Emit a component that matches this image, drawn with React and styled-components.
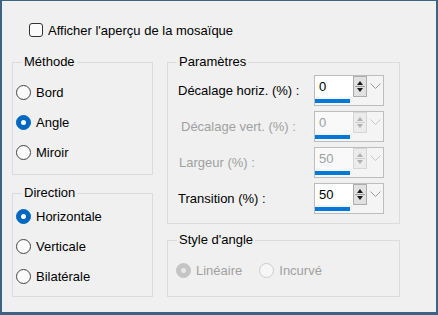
import React from "react";
import styled, { createGlobalStyle } from "styled-components";

const GlobalStyle = createGlobalStyle`
  body {
    margin: 0;
    font-family: "Liberation Sans", Arial, sans-serif;
    font-size: 13px;
    color: #000;
  }
`;

// =========================================================
const Window = styled.div`
  width: 438px;
  height: 315px;
  box-sizing: border-box;
  border: solid #3c6385;
  border-width: 1px 2px 3px 2px;
  background: #f0f0f0;
  padding: 21px 0 0 10px;
  display: flex;
  flex-direction: column;
`;

const CheckRow = styled.label`
  display: flex;
  align-items: center;
  gap: 5px;
  height: 16px;
  margin-left: 17px;
`;

const CheckBox = styled.span`
  width: 14px;
  height: 14px;
  box-sizing: border-box;
  border: 1px solid #333;
  border-radius: 3px;
  background: #fbfbfb;
`;

const Columns = styled.div`
  display: flex;
  gap: 14px;
  margin-top: 16px;
`;

const Column = styled.div`
  display: flex;
  flex-direction: column;
  width: ${(p) => p.$w}px;
  gap: ${(p) => p.$gap}px;
`;

const Group = styled.fieldset`
  margin: 0;
  padding: 0;
  min-width: 0;
  box-sizing: border-box;
  height: ${(p) => p.$h}px;
  border: 1px solid #dcdcdc;
`;

const Legend = styled.legend`
  margin-left: 9px;
  padding: 0 2px;
  line-height: 16px;
`;

const GroupBody = styled.div`
  padding: ${(p) => p.$top}px 0 0 ${(p) => p.$left}px;
  display: flex;
  flex-direction: ${(p) => (p.$row ? "row" : "column")};
`;

// =========================================================
const RadioRow = styled.label`
  display: flex;
  align-items: center;
  gap: 5px;
  height: 30px;
  margin-right: ${(p) => p.$mr || 0}px;
  color: ${(p) => (p.$disabled ? "#a0a0a0" : "#000")};
`;

const Dot = styled.span`
  width: 15px;
  height: 15px;
  box-sizing: border-box;
  border-radius: 50%;
  display: flex;
  align-items: center;
  justify-content: center;
  border: 1px solid
    ${(p) => (p.$checked ? (p.$disabled ? "#c4c4c4" : "#0067c0") : p.$disabled ? "#cccccc" : "#444")};
  background: ${(p) => (p.$checked ? (p.$disabled ? "#c4c4c4" : "#0067c0") : p.$disabled ? "#f6f6f6" : "#fbfbfb")};

  &::after {
    content: "";
    display: ${(p) => (p.$checked ? "block" : "none")};
    width: 5px;
    height: 5px;
    border-radius: 50%;
    background: ${(p) => (p.$disabled ? "#e8e8e8" : "#fff")};
  }
`;

function Radio({ label, checked, disabled, mr }) {
  return (
    <RadioRow $disabled={disabled} $mr={mr}>
      <Dot $checked={checked} $disabled={disabled} />
      {label}
    </RadioRow>
  );
}

// =========================================================
const ParamRows = styled.div`
  display: flex;
  flex-direction: column;
  gap: 5px;
`;

const ParamRow = styled.div`
  display: flex;
  align-items: center;
  height: 31px;
`;

const ParamLabel = styled.span`
  width: ${(p) => 136 - p.$indent}px;
  padding-left: ${(p) => p.$indent}px;
  color: ${(p) => (p.$disabled ? "#a0a0a0" : "#000")};
`;

const Spin = styled.div`
  width: 70px;
  height: 31px;
  box-sizing: border-box;
  border: 1px solid #bdbdbd;
  display: grid;
  grid-template-columns: 38px 14px 1fr;
  grid-template-rows: 21px 1fr;
  background: #f4f4f4;
`;

const Field = styled.div`
  background: ${(p) => (p.$disabled ? "#f9f9f9" : "#fff")};
  color: ${(p) => (p.$disabled ? "#a0a0a0" : "#000")};
  padding-left: 4px;
  line-height: 21px;
`;

const Arrows = styled.div`
  box-sizing: border-box;
  border: 1px solid ${(p) => (p.$disabled ? "#d6d6d6" : "#adadad")};
  background: ${(p) => (p.$disabled ? "#ececec" : "#e1e1e1")};
  display: flex;
`;

const Chevron = styled.div`
  display: flex;
  align-items: center;
  justify-content: center;
`;

const Track = styled.div`
  grid-column: 1 / span 3;
  padding-top: 2px;
`;

const Bar = styled.div`
  width: 35px;
  height: 4px;
  background: #0078d7;
`;

function SpinBox({ value, disabled }) {
  const ink = disabled ? "#b0b0b0" : "#1a1a1a";
  return (
    <Spin>
      <Field $disabled={disabled}>{value}</Field>
      <Arrows $disabled={disabled}>
        <svg width="12" height="19" viewBox="0 0 12 19">
          <path d="M3 8 L6 4 L9 8 Z" fill={ink} />
          <line x1="1" y1="9.5" x2="11" y2="9.5" stroke={disabled ? "#d0d0d0" : "#9a9a9a"} />
          <path d="M3 11 L6 15 L9 11 Z" fill={ink} />
        </svg>
      </Arrows>
      <Chevron>
        <svg width="11" height="7" viewBox="0 0 11 7">
          <polyline points="0.5,0.5 5.5,5.5 10.5,0.5" fill="none" stroke={disabled ? "#c8c8c8" : "#9a9a9a"} />
        </svg>
      </Chevron>
      <Track>
        <Bar />
      </Track>
    </Spin>
  );
}

const params = [
  { label: "Décalage horiz. (%) :", value: "0" },
  { label: "Décalage vert. (%) :", value: "0", disabled: true, indent: 3 },
  { label: "Largeur (%) :", value: "50", disabled: true, indent: 1 },
  { label: "Transition (%) :", value: "50" },
];

function App() {
  return (
    <>
      <GlobalStyle />
      <Window>
        <CheckRow>
          <CheckBox />
          Afficher l'aperçu de la mosaïque
        </CheckRow>
        <Columns>
          <Column $w={141} $gap={10}>
            <Group $h={121}>
              <Legend>Méthode</Legend>
              <GroupBody $top={7} $left={3}>
                <Radio label="Bord" />
                <Radio label="Angle" checked />
                <Radio label="Miroir" />
              </GroupBody>
            </Group>
            <Group $h={112}>
              <Legend>Direction</Legend>
              <GroupBody $top={0} $left={3}>
                <Radio label="Horizontale" checked />
                <Radio label="Verticale" />
                <Radio label="Bilatérale" />
              </GroupBody>
            </Group>
          </Column>
          <Column $w={233} $gap={8}>
            <Group $h={170}>
              <Legend>Paramètres</Legend>
              <GroupBody $top={5} $left={10}>
                <ParamRows>
                  {params.map((p) => (
                    <ParamRow key={p.label}>
                      <ParamLabel $disabled={p.disabled} $indent={p.indent || 0}>
                        {p.label}
                      </ParamLabel>
                      <SpinBox value={p.value} disabled={p.disabled} />
                    </ParamRow>
                  ))}
                </ParamRows>
              </GroupBody>
            </Group>
            <Group $h={65}>
              <Legend>Style d'angle</Legend>
              <GroupBody $top={7} $left={8} $row>
                <Radio label="Linéaire" checked disabled mr={17} />
                <Radio label="Incurvé" disabled />
              </GroupBody>
            </Group>
          </Column>
        </Columns>
      </Window>
    </>
  );
}

export default App;
